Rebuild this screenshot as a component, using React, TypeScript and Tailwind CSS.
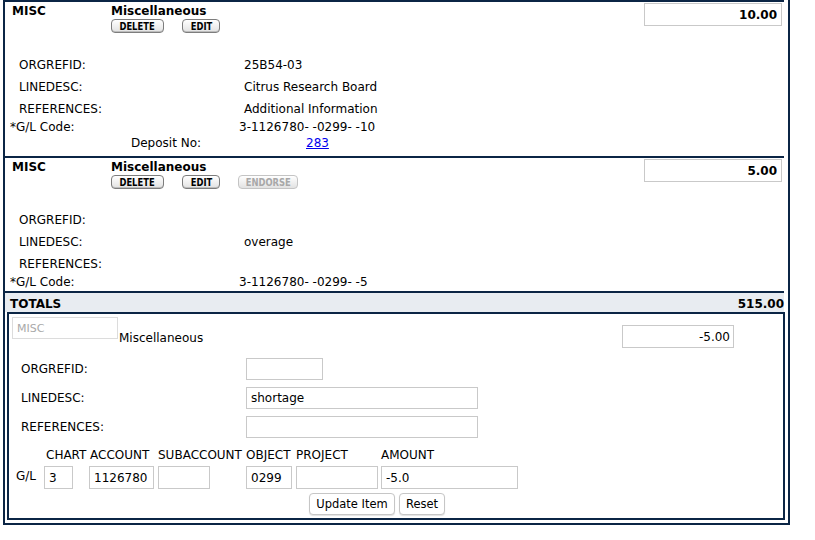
import React from 'react'

type Line = { label: string; value?: string }

const BTN =
  "h-[14px] rounded-[4px] border bg-gradient-to-b from-white to-[#e2e2e2] text-[10.5px] font-bold leading-none flex items-center justify-center"

function SmallButton({ label, width, disabled }: { label: string; width: string; disabled?: boolean }) {
  return (
    <button
      className={`${BTN} ${width} ${
        disabled ? 'border-[#c4c4c4] text-[#a8a8a8]' : 'border-[#7d7d7d] text-black shadow-[inset_0_-1px_0_#bdbdbd]'
      }`}
    >
      <span className="inline-block scale-x-[0.8]">{label}</span>
    </button>
  )
}

function ItemRow({
  amount,
  lines,
  glCode,
  endorse,
  deposit,
  gapTop,
}: {
  amount: string
  lines: Line[]
  glCode: string
  endorse?: boolean
  deposit?: string
  gapTop: string
}) {
  return (
    <div className="border-t-2 border-[#0b2545]">
      <div className="flex items-start">
        <div className="w-[106px] pl-[7px] pt-[2px] font-bold leading-[14px]">MISC</div>
        <div className="flex flex-col">
          <div className="pt-[2px] font-bold leading-[14px]">Miscellaneous</div>
          <div className="mt-[1px] flex gap-[18px]">
            <SmallButton label="DELETE" width="w-[53px]" />
            <SmallButton label="EDIT" width="w-[38px]" />
            {endorse && <SmallButton label="ENDORSE" width="w-[60px]" disabled />}
          </div>
        </div>
        <div className="flex-1" />
        <input
          readOnly
          defaultValue={amount}
          className="mt-[1px] mr-[2px] h-[23px] w-[138px] border border-[#c9c9c9] pr-[4px] text-right font-bold outline-none"
        />
      </div>

      <div className={gapTop}>
        {lines.map((l) => (
          <div key={l.label} className="flex h-[22px] items-center">
            <div className="w-[239px] pl-[14px]">{l.label}</div>
            <div>{l.value}</div>
          </div>
        ))}
        <div className="flex h-[14px] items-center">
          <div className="w-[234px] pl-[5px]">*G/L Code:</div>
          <div>{glCode}</div>
        </div>
        {deposit && (
          <div className="mt-[2px] flex h-[14px] items-center">
            <div className="w-[301px] pl-[126px]">Deposit No:</div>
            <a href="#" className="text-[#0000ee] underline">
              {deposit}
            </a>
          </div>
        )}
      </div>
      <div className={deposit ? 'h-[6px]' : 'h-[2px]'} />
    </div>
  )
}

const FIELD = 'h-[22px] border border-[#c9c9c9] px-[4px] outline-none text-[12px]'

const GL_COLS = [
  { head: 'CHART', col: 'w-[45px]', input: 'w-[29px]', value: '3', headPad: 'pl-[2px]' },
  { head: 'ACCOUNT', col: 'w-[69px]', input: 'w-[65px]', value: '1126780', headPad: 'pl-[1px]' },
  { head: 'SUBACCOUNT', col: 'w-[88px]', input: 'w-[52px]', value: '', headPad: '' },
  { head: 'OBJECT', col: 'w-[50px]', input: 'w-[46px]', value: '0299', headPad: '' },
  { head: 'PROJECT', col: 'w-[85px]', input: 'w-[82px]', value: '', headPad: '' },
  { head: 'AMOUNT', col: 'w-[140px]', input: 'w-[137px]', value: '-5.0', headPad: '' },
]

function EditBox() {
  return (
    <div className="ml-[2px] h-[208px] w-[778px] border-2 border-[#0b2545] pt-[3px]">
      <div className="flex items-start">
        <div className="flex w-[613px] items-start">
          <input
            readOnly
            defaultValue="MISC"
            className="ml-[3px] h-[22px] w-[106px] border border-[#dcdcdc] px-[4px] text-[11px] text-[#a9a9a9] outline-none"
          />
          <div className="ml-[1px] mt-[14px] leading-[14px]">Miscellaneous</div>
        </div>
        <input
          readOnly
          defaultValue="-5.00"
          className="mt-[8px] h-[23px] w-[112px] border border-[#c9c9c9] pr-[3px] text-right outline-none"
        />
      </div>

      <div className="mt-[10px] flex flex-col gap-[7px]">
        {[
          { label: 'ORGREFID:', w: 'w-[77px]', v: '' },
          { label: 'LINEDESC:', w: 'w-[232px]', v: 'shortage' },
          { label: 'REFERENCES:', w: 'w-[232px]', v: '' },
        ].map((r) => (
          <div key={r.label} className="flex h-[22px] items-center">
            <div className="w-[237px] pl-[12px]">{r.label}</div>
            <input readOnly defaultValue={r.v} className={`${FIELD} ${r.w}`} />
          </div>
        ))}
      </div>

      <div className="mt-[10px] flex h-[14px] items-center leading-[14px]">
        <div className="w-[35px]" />
        {GL_COLS.map((c) => (
          <div key={c.head} className={`${c.col} ${c.headPad}`}>
            {c.head}
          </div>
        ))}
      </div>

      <div className="mt-[4px] flex h-[23px] items-center">
        <div className="w-[35px] pb-[3px] pl-[7px]">G/L</div>
        {GL_COLS.map((c) => (
          <div key={c.head} className={c.col}>
            <input readOnly defaultValue={c.value} className={`${FIELD} h-[23px] ${c.input}`} />
          </div>
        ))}
      </div>

      <div className="mt-[4px] flex gap-[4px] pl-[300px]">
        <button className="h-[22px] w-[86px] rounded-[4px] border border-[#c6c6c6] bg-white text-[11.5px] shadow-[0_1px_1px_rgba(0,0,0,0.12)]">
          Update Item
        </button>
        <button className="h-[22px] w-[46px] rounded-[4px] border border-[#c6c6c6] bg-white text-[11.5px] shadow-[0_1px_1px_rgba(0,0,0,0.12)]">
          Reset
        </button>
      </div>
    </div>
  )
}

export default function App() {
  return (
    <div className="h-[540px] w-[815px] bg-white font-['DejaVu_Sans',sans-serif] text-[12px] leading-[14px] text-black">
      <div className="ml-[3px] w-[787px] border-x-2 border-b-2 border-[#0b2545] pr-[4px]">
        <ItemRow
          amount="10.00"
          gapTop="mt-[21px]"
          lines={[
            { label: 'ORGREFID:', value: '25B54-03' },
            { label: 'LINEDESC:', value: 'Citrus Research Board' },
            { label: 'REFERENCES:', value: 'Additional Information' },
          ]}
          glCode="3-1126780- -0299- -10"
          deposit="283"
        />
        <ItemRow
          amount="5.00"
          gapTop="mt-[20px]"
          endorse
          lines={[
            { label: 'ORGREFID:' },
            { label: 'LINEDESC:', value: 'overage' },
            { label: 'REFERENCES:' },
          ]}
          glCode="3-1126780- -0299- -5"
        />
        <div className="flex h-[21px] items-start justify-between border-t-2 border-[#0b2545] bg-[#e8ecf1] pl-[5px] pt-[4px] font-bold">
          <span>TOTALS</span>
          <span>515.00</span>
        </div>
        <EditBox />
        <div className="h-[3px]" />
      </div>
    </div>
  )
}
